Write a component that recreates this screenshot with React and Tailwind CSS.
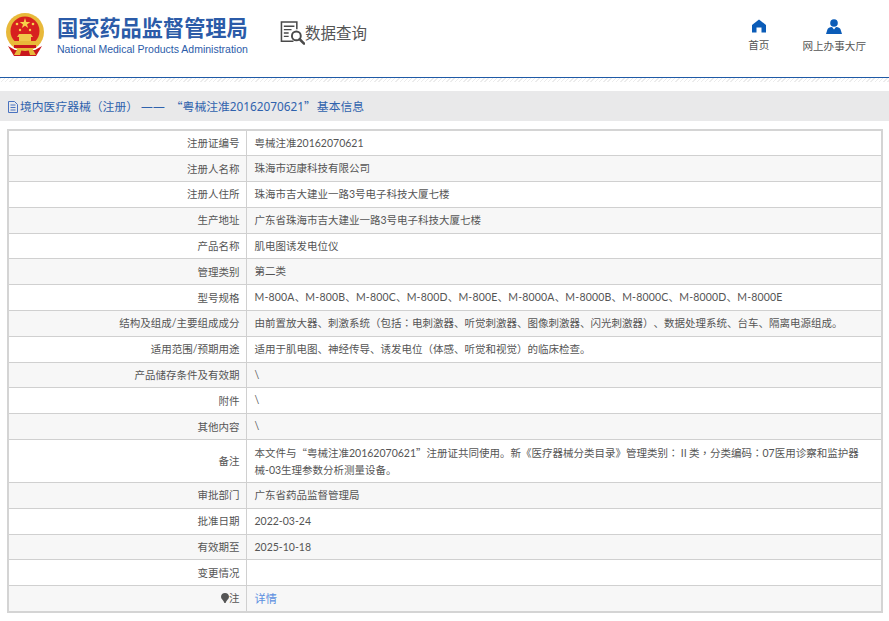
import React from "react";

const ROWS = [
  ["注册证编号", "粤械注准20162070621"],
  ["注册人名称", "珠海市迈康科技有限公司"],
  ["注册人住所", "珠海市吉大建业一路3号电子科技大厦七楼"],
  ["生产地址", "广东省珠海市吉大建业一路3号电子科技大厦七楼"],
  ["产品名称", "肌电图诱发电位仪"],
  ["管理类别", "第二类"],
  ["型号规格", "M-800A、M-800B、M-800C、M-800D、M-800E、M-8000A、M-8000B、M-8000C、M-8000D、M-8000E"],
  ["结构及组成/主要组成成分", "由前置放大器、刺激系统（包括：电刺激器、听觉刺激器、图像刺激器、闪光刺激器）、数据处理系统、台车、隔离电源组成。"],
  ["适用范围/预期用途", "适用于肌电图、神经传导、诱发电位（体感、听觉和视觉）的临床检查。"],
  ["产品储存条件及有效期", "\\"],
  ["附件", "\\"],
  ["其他内容", "\\"],
  ["备注", "本文件与“粤械注准20162070621”注册证共同使用。新《医疗器械分类目录》管理类别：Ⅱ类，分类编码：07医用诊察和监护器\n械-03生理参数分析测量设备。"],
  ["审批部门", "广东省药品监督管理局"],
  ["批准日期", "2022-03-24"],
  ["有效期至", "2025-10-18"],
  ["变更情况", ""],
];

// 这些标点在原图里是居中的全角字形
function Punct({ text }) {
  return text.split(/([：，“”（）])/).map((part, i) =>
    /^[：，“”（）]$/.test(part) ? (
      <span key={i} className="font-['Noto_Sans_CJK_TC',sans-serif]">{part}</span>
    ) : (
      part
    )
  );
}

function Emblem() {
  return (
    <svg width="40" height="44" viewBox="0 0 40 44" className="shrink-0">
      <path d="M3 34 L9 44 L31 44 L37 34 L30 38 L10 38 Z" fill="#c8161d" />
      <circle cx="20" cy="20" r="19" fill="#e8b93a" />
      <circle cx="20" cy="19" r="14.5" fill="#d7201f" />
      <path d="M20 6 L21.3 10 L25.3 10 L22 12.4 L23.2 16 L20 13.8 L16.8 16 L18 12.4 L14.7 10 L18.7 10 Z" fill="#f6d24a" />
      <circle cx="12" cy="12" r="1.3" fill="#f6d24a" />
      <circle cx="28" cy="12" r="1.3" fill="#f6d24a" />
      <circle cx="15" cy="18" r="1.2" fill="#f6d24a" />
      <circle cx="25" cy="18" r="1.2" fill="#f6d24a" />
      <path d="M12 25 L14 22 L26 22 L28 25 L26 25 L26 29 L14 29 L14 25 Z" fill="#f0c84a" />
      <path d="M6 29 L34 29 L31 36 L9 36 Z" fill="#e8b93a" />
      <rect x="9" y="33" width="22" height="3" fill="#c8161d" />
      <path d="M13 36 L17 36 L15 43 L9 43 Z M23 36 L27 36 L31 43 L25 43 Z" fill="#e8b93a" />
    </svg>
  );
}

function SearchDocIcon() {
  return (
    <svg width="25" height="26" viewBox="0 0 26 26" fill="none" stroke="#4a4a4a" className="shrink-0">
      <path d="M14 21.5 H1.5 V1.5 H17.5 V9" strokeWidth="1.6" />
      <path d="M4 6 H15 M4 9.5 H12 M4 13 H9 M4 16.5 H9" strokeWidth="1.4" />
      <circle cx="17" cy="16" r="4.6" strokeWidth="2" />
      <path d="M20.5 19.5 L25 24" strokeWidth="2.6" strokeLinecap="round" />
    </svg>
  );
}

function HomeIcon() {
  return (
    <svg width="14" height="14" viewBox="0 0 14 14" fill="#0b5cb8">
      <path d="M7 0.5 L14 6 V13.5 H9.5 V8.5 H4.5 V13.5 H0 V6 Z" />
    </svg>
  );
}

function UserIcon() {
  return (
    <svg width="16" height="15" viewBox="0 0 16 15" fill="#0b5cb8">
      <circle cx="8" cy="4" r="3.8" />
      <path d="M0 15 L1.6 10 Q2.2 8.6 4.2 8.2 L6 8 L8 10.5 L10 8 L11.8 8.2 Q13.8 8.6 14.4 10 L16 15 Z" />
    </svg>
  );
}

export default function App() {
  return (
    <div className="w-[889px] h-[621px] overflow-hidden bg-white text-[#555] font-['Lato','Noto_Sans_CJK_SC',sans-serif] [text-spacing-trim:space-all]">
      {/* Header */}
      <header className="flex items-start h-[77px]">
        <div className="flex items-start pt-[12px] pl-[5px] w-[280px]">
          <Emblem />
          <div className="ml-[12px]">
            <div className="text-[21.2px] leading-[30px] font-bold text-[#2b5ba8] whitespace-nowrap font-['Noto_Sans_CJK_SC',sans-serif]">国家药品监督管理局</div>
            <div className="text-[10.5px] leading-[14px] text-[#2b5ba8] whitespace-nowrap font-['Liberation_Sans',sans-serif]">National Medical Products Administration</div>
          </div>
        </div>
        <div className="flex items-center pt-[20px]">
          <SearchDocIcon />
          <span className="text-[15.5px] leading-[24px] text-[#555]">数据查询</span>
        </div>
        <nav className="ml-auto flex pt-[19px] pr-[23px] text-[10.6px] text-[#555]">
          <div className="flex flex-col items-center gap-[4px] mr-[33px]">
            <HomeIcon />
            <span className="leading-[16px]">首页</span>
          </div>
          <div className="flex flex-col items-center gap-[4px]">
            <UserIcon />
            <span className="leading-[16px]">网上办事大厅</span>
          </div>
        </nav>
      </header>
      <div className="h-[1px] bg-[#1f5aa6]" />
      <div className="h-[4px] bg-[repeating-linear-gradient(135deg,#ececec_0px,#ececec_1px,#ffffff_1px,#ffffff_3px)]" />

      {/* Breadcrumb */}
      <div className="mt-[9px] h-[30px] bg-[#e9e9ea] flex items-center pl-[8px] pt-[1px] text-[#2f62ad] text-[11.8px] whitespace-pre font-['Noto_Sans','Noto_Sans_CJK_SC',sans-serif]">
        <svg width="10" height="12" viewBox="0 0 10 12" fill="none" stroke="#4a73c0" strokeWidth="1" className="mr-[2px] shrink-0">
          <path d="M0.5 0.5 H6.5 L9.5 3.5 V11.5 H0.5 Z M2.5 4 H7.5 M2.5 6.5 H7.5 M2.5 9 H7.5" />
        </svg>
        <span>
          <Punct text="境内医疗器械（注册） " />
          <span className="mr-[3px]">——</span>
          <Punct text=" “粤械注准20162070621”" />
          <span className="ml-[1px]">基本信息</span>
        </span>
      </div>

      {/* Detail table */}
      <table className="mt-[8px] ml-[7px] w-[876px] table-fixed border-collapse border-2 border-[#d4d4d4] text-[10.5px]">
        <colgroup>
          <col className="w-[238px]" />
          <col />
        </colgroup>
        <tbody>
          {ROWS.map(([label, value], i) => (
            <tr key={label} className={i % 2 === 1 ? "bg-[#f7f7f7]" : "bg-white"}>
              <td className={`${label === "备注" ? "h-[43px]" : "h-[25.8px]"} border border-[#d0d0d0] text-right pr-[6px] py-0 leading-[16px]`}>{label}</td>
              <td className={`border border-[#d0d0d0] pl-[8px] pr-[10px] py-0 leading-[17px] ${label === "型号规格" ? "tracking-[0.19px]" : ""}`}>
                {value.split("\n").map((line) => (
                  <div key={line} className="whitespace-nowrap">
                    <Punct text={line} />
                  </div>
                ))}
              </td>
            </tr>
          ))}
          <tr className="bg-[#f7f7f7]">
            <td className="h-[25.8px] border border-[#d0d0d0] text-right pr-[6px] py-0 leading-[16px]">
              <span className="inline-flex items-center">
                <svg width="8" height="10" viewBox="0 0 8 10" fill="#555">
                  <path d="M4 0 C6.4 0 8 1.7 8 3.9 C8 6 5.2 7.4 4.6 10 H3.4 C2.8 7.4 0 6 0 3.9 C0 1.7 1.6 0 4 0 Z" />
                </svg>
                注
              </span>
            </td>
            <td className="border border-[#d0d0d0] pl-[8px] py-0 leading-[17px] text-[#5b8fe0] text-[11.2px]">详情</td>
          </tr>
        </tbody>
      </table>
    </div>
  );
}
